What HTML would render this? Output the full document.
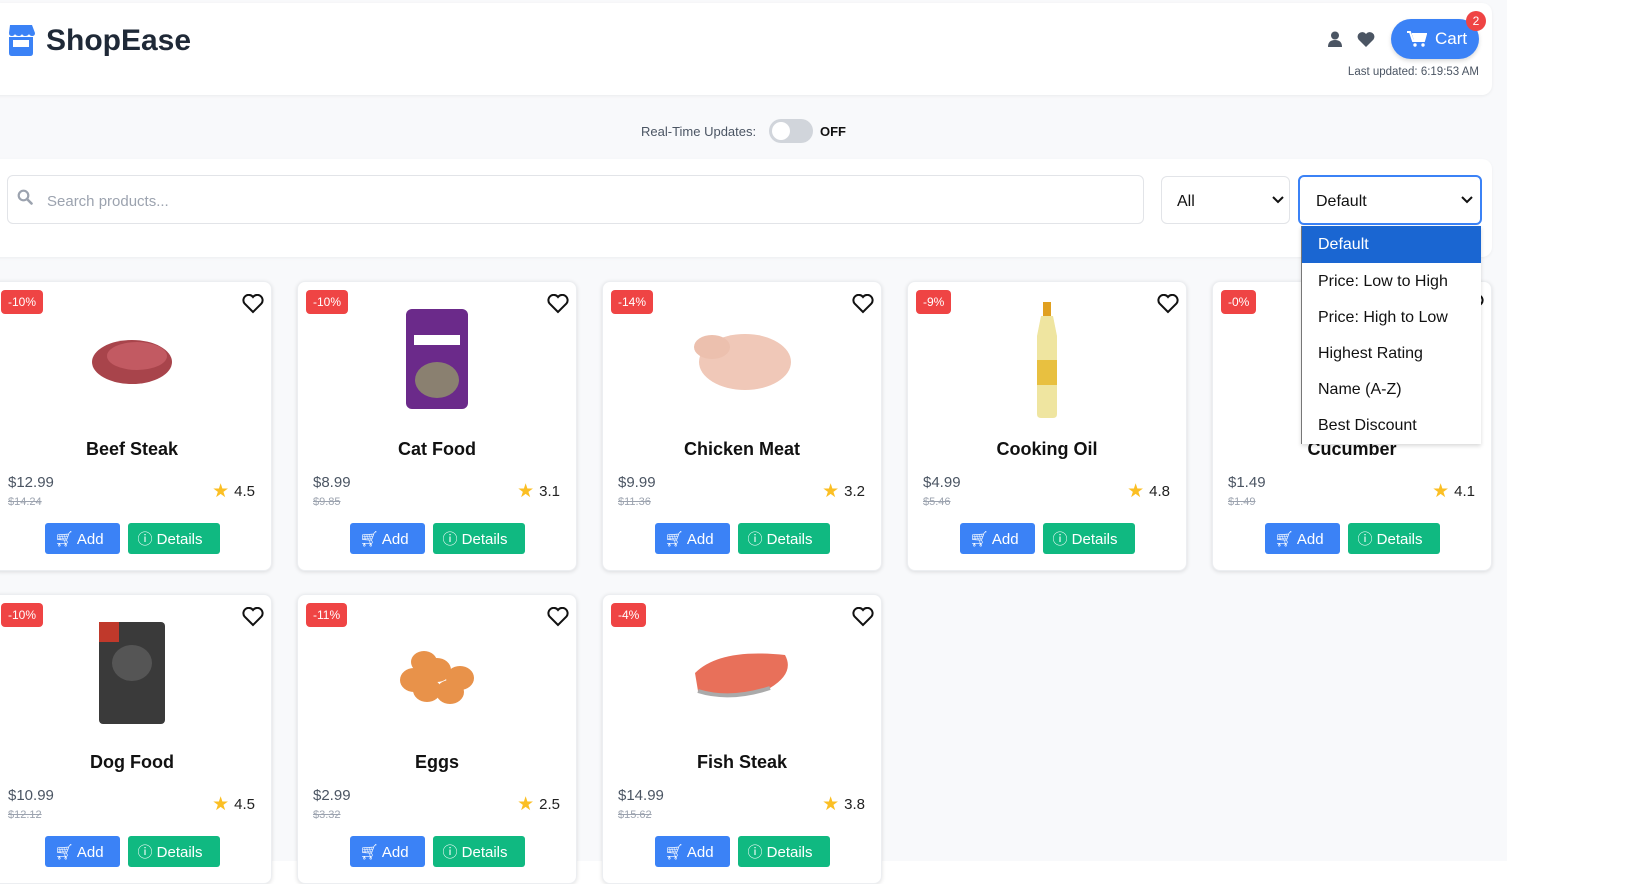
<!DOCTYPE html>
<html><head><meta charset="utf-8"><style>
*{box-sizing:border-box;margin:0;padding:0}
body{width:1626px;height:861px;overflow:hidden;background:#fff;font-family:"Liberation Sans",sans-serif;position:relative;color:#1f2937}
.pg{position:absolute;left:0;top:0;width:1507px;height:861px;background:#f8f9fb}
.abs{position:absolute}
.hdr{left:-10px;top:3px;width:1502px;height:92px;background:#fff;border-radius:10px;box-shadow:0 1px 3px rgba(0,0,0,.06)}
.filt{left:-10px;top:159px;width:1502px;height:98px;background:#fff;border-radius:10px;box-shadow:0 1px 3px rgba(0,0,0,.05)}
.inp{border:1px solid #e2e4e8;border-radius:6px;background:#fff}
.card{position:absolute;width:280px;height:290px;background:#fff;border-radius:8px;box-shadow:0 1px 4px rgba(0,0,0,.12);border:1px solid #eceef1}
.badge{position:absolute;left:8px;top:8px;height:24px;padding:0 7px;background:#ef4444;color:#fff;font-size:12px;line-height:24px;border-radius:4px}
.heart{position:absolute;right:7px;top:12px}
.img{position:absolute;left:0;right:0;top:20px;height:115px;display:flex;align-items:center;justify-content:center}
.nm{position:absolute;left:0;right:0;top:157px;text-align:center;font-size:18px;font-weight:bold;color:#111}
.pr{position:absolute;left:15px;top:192px;font-size:15px;color:#4b5563}
.old{position:absolute;left:15px;top:214px;font-size:11px;color:#9ca3af;text-decoration:line-through}
.rt{position:absolute;right:16px;top:198px;font-size:15px;color:#222;display:flex;align-items:center;gap:5px}
.btns{position:absolute;left:0;right:0;top:241px;display:flex;justify-content:center;gap:8px}
.b{height:31px;border-radius:3px;color:#fff;font-size:15px;display:flex;align-items:center;gap:5px;padding:0 10px}
.add{background:#3b82f6}.det{background:#10b981}
.dd div{height:36px;line-height:38px;padding-left:16px;font-size:16px;color:#111}
</style></head><body>
<div class="pg"></div>
<div class="abs hdr"></div>
<svg class="abs" style="left:7px;top:25px" width="28" height="31" viewBox="0 0 28 31"><path d="M3 0h22l3 8q0 3-3 3-2 0-3-2-1 2-4 2-2 0-3-2-1 2-3 2-3 0-4-2-1 2-3 2-3 0-3-3z" fill="#3b82f6"/><path d="M2 12h24v16q0 3-3 3H5q-3 0-3-3z" fill="#3b82f6"/><rect x="6" y="15" width="16" height="7" fill="#fff"/></svg>
<div class="abs" style="left:46px;top:24px;font-size:30px;font-weight:bold;color:#1f2937">ShopEase</div>
<svg class="abs" style="left:1327px;top:31px" width="16" height="16" viewBox="0 0 16 16"><circle cx="8" cy="4.5" r="4" fill="#4b5563"/><path d="M1 16q0-7 7-7t7 7z" fill="#4b5563"/></svg>
<svg class="abs" style="left:1357px;top:32px" width="18" height="15" viewBox="0 0 18 15"><path d="M9 15L1.5 7.5A4.5 4.5 0 0 1 9 2a4.5 4.5 0 0 1 7.5 5.5z" fill="#4b5563"/></svg>
<div class="abs" style="left:1391px;top:19px;width:88px;height:40px;border-radius:20px;background:#3b82f6;color:#fff;font-size:17px;display:flex;align-items:center;padding-left:16px;gap:8px;box-shadow:0 2px 4px rgba(0,0,0,.15)"><svg width="20" height="16" viewBox="0 0 20 16"><path d="M0 1h3l3 9h11l2-7H5" fill="none" stroke="#fff" stroke-width="2"/><path d="M5 3h14l-2 7H7z" fill="#fff"/><circle cx="8" cy="14" r="1.7" fill="#fff"/><circle cx="16" cy="14" r="1.7" fill="#fff"/></svg>Cart</div>
<div class="abs" style="left:1466px;top:11px;width:20px;height:20px;border-radius:50%;background:#ef4444;color:#fff;font-size:12px;text-align:center;line-height:20px">2</div>
<div class="abs" style="right:147px;top:66px;font-size:11.5px;color:#4b5563">Last updated: 6:19:53 AM</div>
<div class="abs" style="left:641px;top:124px;font-size:13px;color:#4b5563">Real-Time Updates:</div>
<div class="abs" style="left:769px;top:119px;width:44px;height:24px;border-radius:12px;background:#d1d5db"><div style="position:absolute;left:3px;top:3px;width:18px;height:18px;border-radius:50%;background:#fff"></div></div>
<div class="abs" style="left:820px;top:124px;font-size:13px;font-weight:bold;color:#111">OFF</div>
<div class="abs filt"></div>
<div class="abs inp" style="left:7px;top:175px;width:1137px;height:49px"></div>
<svg class="abs" style="left:17px;top:189px" width="16" height="16" viewBox="0 0 16 16"><circle cx="6.5" cy="6.5" r="4.8" fill="none" stroke="#9ca3af" stroke-width="2.2"/><path d="M10 10l4.5 4.5" stroke="#9ca3af" stroke-width="2.6" stroke-linecap="round"/></svg>
<div class="abs" style="left:47px;top:193px;font-size:15px;color:#9ca3af">Search products...</div>
<div class="abs inp" style="left:1161px;top:176px;width:129px;height:48px"></div>
<div class="abs" style="left:1177px;top:193px;font-size:16px;color:#111">All</div>
<svg class="abs" style="left:1272px;top:196px" width="12" height="8" viewBox="0 0 12 8"><path d="M1 1l5 5 5-5" fill="none" stroke="#111" stroke-width="2"/></svg>
<div class="abs" style="left:1298px;top:175px;width:184px;height:50px;border:2px solid #3b82f6;border-radius:6px;background:#fff"></div>
<div class="abs" style="left:1316px;top:193px;font-size:16px;color:#111">Default</div>
<svg class="abs" style="left:1461px;top:196px" width="12" height="8" viewBox="0 0 12 8"><path d="M1 1l5 5 5-5" fill="none" stroke="#111" stroke-width="2"/></svg>

<div class="card" style="left:-8px;top:281px"><div class="badge">-10%</div><svg class="heart" width="22" height="20" viewBox="0 0 22 20"><path d="M11 18L2.5 9.5A5 5 0 0 1 11 3a5 5 0 0 1 8.5 6.5z" fill="none" stroke="#111" stroke-width="2"/></svg><div class="img"><svg width="90" height="60"><ellipse cx="45" cy="32" rx="40" ry="22" fill="#a8444b"/><ellipse cx="50" cy="26" rx="30" ry="14" fill="#c25a62"/></svg></div><div class="nm">Beef Steak</div><div class="pr">$12.99</div><div class="old">$14.24</div><div class="rt"><span style="color:#fbbf24;font-size:19px">★</span>4.5</div><div class="btns"><div class="b add" style="width:75px">🛒︎ Add</div><div class="b det" style="width:92px">ⓘ Details</div></div></div>

<div class="card" style="left:297px;top:281px"><div class="badge">-10%</div><svg class="heart" width="22" height="20" viewBox="0 0 22 20"><path d="M11 18L2.5 9.5A5 5 0 0 1 11 3a5 5 0 0 1 8.5 6.5z" fill="none" stroke="#111" stroke-width="2"/></svg><div class="img"><svg width="70" height="110"><rect x="4" y="4" width="62" height="100" rx="6" fill="#6b2a8a"/><rect x="12" y="30" width="46" height="10" fill="#fff"/><ellipse cx="35" cy="75" rx="22" ry="18" fill="#8a8070"/></svg></div><div class="nm">Cat Food</div><div class="pr">$8.99</div><div class="old">$9.85</div><div class="rt"><span style="color:#fbbf24;font-size:19px">★</span>3.1</div><div class="btns"><div class="b add" style="width:75px">🛒︎ Add</div><div class="b det" style="width:92px">ⓘ Details</div></div></div>

<div class="card" style="left:602px;top:281px"><div class="badge">-14%</div><svg class="heart" width="22" height="20" viewBox="0 0 22 20"><path d="M11 18L2.5 9.5A5 5 0 0 1 11 3a5 5 0 0 1 8.5 6.5z" fill="none" stroke="#111" stroke-width="2"/></svg><div class="img"><svg width="110" height="75"><ellipse cx="58" cy="40" rx="46" ry="28" fill="#f0c8b8"/><ellipse cx="25" cy="25" rx="18" ry="12" fill="#ecc0ae"/></svg></div><div class="nm">Chicken Meat</div><div class="pr">$9.99</div><div class="old">$11.36</div><div class="rt"><span style="color:#fbbf24;font-size:19px">★</span>3.2</div><div class="btns"><div class="b add" style="width:75px">🛒︎ Add</div><div class="b det" style="width:92px">ⓘ Details</div></div></div>

<div class="card" style="left:907px;top:281px"><div class="badge">-9%</div><svg class="heart" width="22" height="20" viewBox="0 0 22 20"><path d="M11 18L2.5 9.5A5 5 0 0 1 11 3a5 5 0 0 1 8.5 6.5z" fill="none" stroke="#111" stroke-width="2"/></svg><div class="img"><svg width="40" height="120"><rect x="16" y="2" width="8" height="14" fill="#e0a020"/><path d="M14 16h12l4 20v78q0 4-4 4H14q-4 0-4-4V36z" fill="#efe5a0"/><rect x="10" y="60" width="20" height="25" fill="#e8c040"/></svg></div><div class="nm">Cooking Oil</div><div class="pr">$4.99</div><div class="old">$5.46</div><div class="rt"><span style="color:#fbbf24;font-size:19px">★</span>4.8</div><div class="btns"><div class="b add" style="width:75px">🛒︎ Add</div><div class="b det" style="width:92px">ⓘ Details</div></div></div>

<div class="card" style="left:1212px;top:281px"><div class="badge">-0%</div><svg class="heart" width="22" height="20" viewBox="0 0 22 20"><path d="M11 18L2.5 9.5A5 5 0 0 1 11 3a5 5 0 0 1 8.5 6.5z" fill="none" stroke="#111" stroke-width="2"/></svg><div class="nm">Cucumber</div><div class="pr">$1.49</div><div class="old">$1.49</div><div class="rt"><span style="color:#fbbf24;font-size:19px">★</span>4.1</div><div class="btns"><div class="b add" style="width:75px">🛒︎ Add</div><div class="b det" style="width:92px">ⓘ Details</div></div></div>

<div class="card" style="left:-8px;top:594px"><div class="badge">-10%</div><svg class="heart" width="22" height="20" viewBox="0 0 22 20"><path d="M11 18L2.5 9.5A5 5 0 0 1 11 3a5 5 0 0 1 8.5 6.5z" fill="none" stroke="#111" stroke-width="2"/></svg><div class="img"><svg width="70" height="110"><rect x="2" y="4" width="66" height="102" rx="4" fill="#3a3a3a"/><rect x="2" y="4" width="20" height="20" fill="#c0392b"/><ellipse cx="35" cy="45" rx="20" ry="18" fill="#555"/></svg></div><div class="nm">Dog Food</div><div class="pr">$10.99</div><div class="old">$12.12</div><div class="rt"><span style="color:#fbbf24;font-size:19px">★</span>4.5</div><div class="btns"><div class="b add" style="width:75px">🛒︎ Add</div><div class="b det" style="width:92px">ⓘ Details</div></div></div>

<div class="card" style="left:297px;top:594px"><div class="badge">-11%</div><svg class="heart" width="22" height="20" viewBox="0 0 22 20"><path d="M11 18L2.5 9.5A5 5 0 0 1 11 3a5 5 0 0 1 8.5 6.5z" fill="none" stroke="#111" stroke-width="2"/></svg><div class="img"><svg width="90" height="65"><g fill="#e8924a"><ellipse cx="22" cy="40" rx="14" ry="12"/><ellipse cx="45" cy="30" rx="14" ry="12"/><ellipse cx="68" cy="38" rx="14" ry="12"/><ellipse cx="35" cy="50" rx="14" ry="12"/><ellipse cx="58" cy="52" rx="14" ry="12"/><ellipse cx="32" cy="22" rx="13" ry="11"/></g></svg></div><div class="nm">Eggs</div><div class="pr">$2.99</div><div class="old">$3.32</div><div class="rt"><span style="color:#fbbf24;font-size:19px">★</span>2.5</div><div class="btns"><div class="b add" style="width:75px">🛒︎ Add</div><div class="b det" style="width:92px">ⓘ Details</div></div></div>

<div class="card" style="left:602px;top:594px"><div class="badge">-4%</div><svg class="heart" width="22" height="20" viewBox="0 0 22 20"><path d="M11 18L2.5 9.5A5 5 0 0 1 11 3a5 5 0 0 1 8.5 6.5z" fill="none" stroke="#111" stroke-width="2"/></svg><div class="img"><svg width="105" height="60"><path d="M5 30Q30 5 95 12Q105 30 80 45Q40 58 8 48z" fill="#e8705a"/><path d="M8 48Q40 58 80 45" stroke="#aaa" stroke-width="4" fill="none"/></svg></div><div class="nm">Fish Steak</div><div class="pr">$14.99</div><div class="old">$15.62</div><div class="rt"><span style="color:#fbbf24;font-size:19px">★</span>3.8</div><div class="btns"><div class="b add" style="width:75px">🛒︎ Add</div><div class="b det" style="width:92px">ⓘ Details</div></div></div>

<div class="abs dd" style="left:1301px;top:226px;width:180px;height:218px;background:#fff;border-left:1px solid #777;box-shadow:0 2px 4px rgba(0,0,0,.15)">
<div style="background:#1a66d2;color:#fff;height:37px">Default</div><div>Price: Low to High</div><div>Price: High to Low</div><div>Highest Rating</div><div>Name (A-Z)</div><div>Best Discount</div></div>
</body></html>
